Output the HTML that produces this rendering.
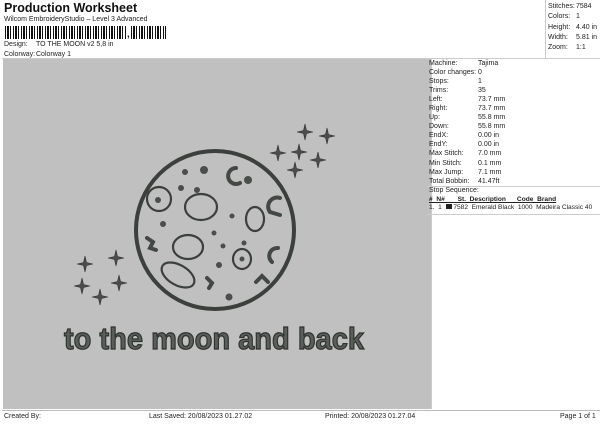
<!DOCTYPE html>
<html><head><style>
*{margin:0;padding:0;box-sizing:border-box}
body{width:600px;height:424px;background:#fff;font-family:"Liberation Sans",sans-serif;color:#222;position:relative;overflow:hidden;font-size:7px}
.a{position:absolute;white-space:nowrap}
.bar{position:absolute;top:26px;height:13px;background:repeating-linear-gradient(90deg,#111 0 1px,#fff 1px 2px,#111 2px 4px,#fff 4px 5px,#111 5px 6px,#fff 6px 8px)}
</style></head><body>
<div class="a" style="left:4px;top:1px;font-size:12.5px;font-weight:bold;color:#111">Production Worksheet</div>
<div class="a" style="left:4px;top:16px">Wilcom EmbroideryStudio – Level 3 Advanced</div>
<div class="bar" style="left:5px;width:122px"></div>
<div class="a" style="left:127px;top:29px;font-size:10px;font-weight:bold">,</div>
<div class="bar" style="left:131px;width:35px"></div>
<div class="a" style="left:4px;top:41px">Design:</div><div class="a" style="left:36px;top:41px">TO THE MOON v2 5,8 in</div>
<div class="a" style="left:4px;top:51px">Colorway:</div><div class="a" style="left:36px;top:51px">Colorway 1</div>
<div style="position:absolute;left:2px;top:58px;width:598px;height:1px;background:#ccc"></div>
<div style="position:absolute;left:545px;top:0;width:1px;height:58px;background:#ccc"></div>
<div class="a" style="left:548px;top:2px;line-height:10.3px">Stitches:<br>Colors:<br>Height:<br>Width:<br>Zoom:</div>
<div class="a" style="left:576px;top:2px;line-height:10.3px">7584<br>1<br>4.40 in<br>5.81 in<br>1:1</div>
<div style="position:absolute;left:3px;top:59px;width:428px;height:350px;background:#c0c0c0"></div>
<div style="position:absolute;left:431px;top:59px;width:169px;height:350px;border-left:1px solid #ccc"></div>
<div class="a" style="left:429px;top:59px;line-height:9.05px">Machine:<br>Color changes:<br>Stops:<br>Trims:<br>Left:<br>Right:<br>Up:<br>Down:<br>EndX:<br>EndY:<br>Max Stitch:<br>Min Stitch:<br>Max Jump:<br>Total Bobbin:</div>
<div class="a" style="left:478px;top:59px;line-height:9.05px">Tajima<br>0<br>1<br>35<br>73.7 mm<br>73.7 mm<br>55.8 mm<br>55.8 mm<br>0.00 in<br>0.00 in<br>7.0 mm<br>0.1 mm<br>7.1 mm<br>41.47ft</div>
<div style="position:absolute;left:427px;top:186px;width:173px;height:1px;background:#ccc"></div>
<div class="a" style="left:429px;top:187px">Stop Sequence:</div>
<div class="a" style="left:429px;top:196px;font-weight:bold;text-decoration:underline;font-size:6.6px">#&nbsp; N#&nbsp;&nbsp;&nbsp;&nbsp;&nbsp;&nbsp; St.&nbsp; Description&nbsp;&nbsp;&nbsp;&nbsp;&nbsp; Code&nbsp; Brand</div>
<div class="a" style="left:429px;top:204px;font-size:6.6px">1.&nbsp; 1&nbsp; <span style="display:inline-block;width:6px;height:5px;background:#222"></span> 7582&nbsp; Emerald Black&nbsp; 1000&nbsp; Madeira Classic 40</div>
<div style="position:absolute;left:427px;top:214px;width:173px;height:1px;background:#ccc"></div>
<div style="position:absolute;left:2px;top:410px;width:598px;height:1px;background:#bbb"></div>
<div class="a" style="left:4px;top:413px">Created By:</div>
<div class="a" style="left:149px;top:413px">Last Saved: 20/08/2023 01.27.02</div>
<div class="a" style="left:325px;top:413px">Printed: 20/08/2023 01.27.04</div>
<div class="a" style="left:560px;top:413px">Page 1 of 1</div>
<svg style="position:absolute;left:0;top:0" width="600" height="424">
<defs><path id="s" d="M0,-8 L1.5,-1.5 L8,0 L1.5,1.5 L0,8 L-1.5,1.5 L-8,0 L-1.5,-1.5Z" fill="#4a4e4a" stroke="#333" stroke-width=".6"/></defs>
<g>
<use href="#s" x="305" y="132"/><use href="#s" x="327" y="136"/><use href="#s" x="278" y="153"/><use href="#s" x="299" y="152"/><use href="#s" x="318" y="160"/><use href="#s" x="295" y="170"/>
<use href="#s" x="85" y="264"/><use href="#s" x="116" y="258"/><use href="#s" x="82" y="286"/><use href="#s" x="119" y="283"/><use href="#s" x="100" y="297"/>
</g>
<circle cx="215" cy="230" r="79" fill="none" stroke="#3c403c" stroke-width="4"/>
<g fill="#4a4e4a">
<circle cx="185" cy="172" r="3"/><circle cx="204" cy="170" r="4"/><circle cx="181" cy="188" r="3"/><circle cx="197" cy="190" r="3"/><circle cx="158" cy="200" r="3"/><circle cx="163" cy="224" r="3"/><circle cx="232" cy="216" r="2.5"/><circle cx="214" cy="233" r="2.5"/><circle cx="223" cy="246" r="2.5"/><circle cx="244" cy="243" r="2.5"/><circle cx="219" cy="265" r="3"/><circle cx="229" cy="297" r="3.5"/><circle cx="248" cy="180" r="4"/><circle cx="242" cy="259" r="2.5"/>
</g>
<g fill="none" stroke="#3c403c" stroke-width="2.2">
<ellipse cx="159" cy="199" rx="12" ry="12"/><ellipse cx="201" cy="207" rx="16" ry="13"/><ellipse cx="255" cy="219" rx="9" ry="12"/><ellipse cx="188" cy="247" rx="15" ry="12"/><ellipse cx="242" cy="259" rx="9" ry="10"/><ellipse cx="178" cy="275" rx="18" ry="10" transform="rotate(30 178 275)"/>
</g>
<g fill="none" stroke="#444844" stroke-width="4" stroke-linecap="round">
<path d="M236,168 A8,8 0 1,0 240,183"/><path d="M280,198 A9,9 0 0,0 270,212 L280,215"/><path d="M278,248 A8,8 0 0,0 272,262"/>
<path d="M147,238 L153,242 L150,248 L156,250"/><path d="M256,282 L262,276 L268,282"/><path d="M207,278 L212,283 L209,288"/>
</g>
<text x="64" y="349" font-family="Liberation Sans" font-weight="bold" font-size="31" textLength="300" lengthAdjust="spacingAndGlyphs" fill="#5a5e5a" stroke="#2e322e" stroke-width="1.2">to the moon and back</text>
</svg>
</body></html>
